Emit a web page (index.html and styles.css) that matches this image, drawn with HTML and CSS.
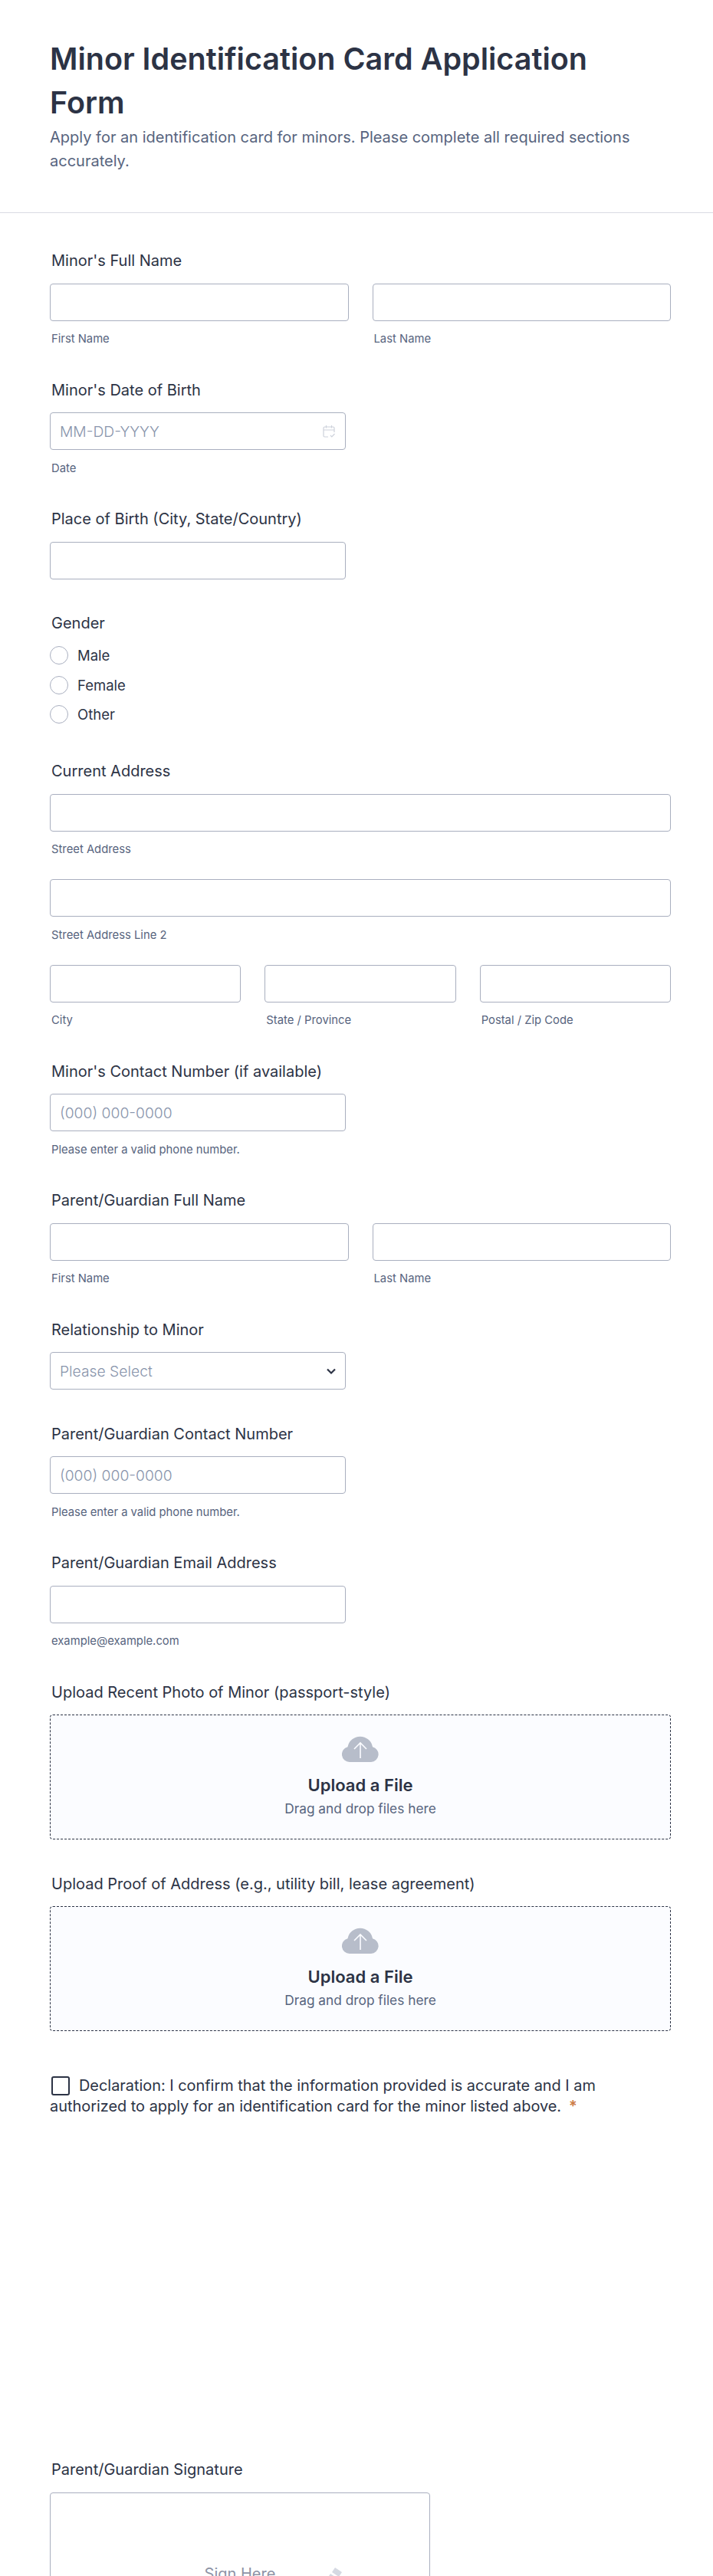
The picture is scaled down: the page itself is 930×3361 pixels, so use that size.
FILE: index.html
```html
<!DOCTYPE html>
<html lang="en">
<head>
    <meta charset="UTF-8">
    <meta name="viewport" content="width=device-width, initial-scale=1.0">
    <title>Minor Identification Card Application Form</title>
    <link rel="stylesheet" href="styles.css">
</head>
<body>
    <header class="form-header">
        <h1>Minor Identification Card Application Form</h1>
        <p>Apply for an identification card for minors. Please complete all required sections accurately.</p>
    </header>

    <form class="form-body">
        <div class="field">
            <label class="field-label">Minor's Full Name</label>
            <div class="row two">
                <div><input type="text"><span class="sub">First Name</span></div>
                <div><input type="text"><span class="sub">Last Name</span></div>
            </div>
        </div>

        <div class="field">
            <label class="field-label">Minor's Date of Birth</label>
            <div class="half with-icon">
                <input type="text" placeholder="MM-DD-YYYY">
                <svg class="date-icon" width="18" height="18" viewBox="0 0 18 18" fill="none" stroke="#cdd1db" stroke-width="1.2">
                    <path d="M8 16H3.500A1.500 1.500 0 0 1 2 14.500V4.500A1.500 1.500 0 0 1 3.500 3h11A1.500 1.500 0 0 1 16 4.500V10"/>
                    <path d="M2 7h14M5.500 1v3.500M12.500 1v3.500"/>
                    <path d="M11 14l1.800 1.800L16.500 12"/>
                </svg>
            </div>
            <span class="sub">Date</span>
        </div>

        <div class="field">
            <label class="field-label">Place of Birth (City, State/Country)</label>
            <div class="half"><input type="text"></div>
        </div>

        <div class="field gender">
            <label class="field-label radio-title">Gender</label>
            <div class="radio-list">
                <div class="radio"><span class="circle"></span>Male</div>
                <div class="radio"><span class="circle"></span>Female</div>
                <div class="radio"><span class="circle"></span>Other</div>
            </div>
        </div>

        <div class="field">
            <label class="field-label">Current Address</label>
            <div class="address-line"><input type="text"><span class="sub">Street Address</span></div>
            <div class="address-line"><input type="text"><span class="sub">Street Address Line 2</span></div>
            <div class="row three">
                <div><input type="text"><span class="sub">City</span></div>
                <div><input type="text"><span class="sub">State / Province</span></div>
                <div><input type="text"><span class="sub">Postal / Zip Code</span></div>
            </div>
        </div>

        <div class="field">
            <label class="field-label">Minor's Contact Number (if available)</label>
            <div class="half"><input type="text" placeholder="(000) 000-0000"></div>
            <span class="sub">Please enter a valid phone number.</span>
        </div>

        <div class="field">
            <label class="field-label">Parent/Guardian Full Name</label>
            <div class="row two">
                <div><input type="text"><span class="sub">First Name</span></div>
                <div><input type="text"><span class="sub">Last Name</span></div>
            </div>
        </div>

        <div class="field">
            <label class="field-label">Relationship to Minor</label>
            <div class="half with-icon">
                <select>
                    <option>Please Select</option>
                </select>
                <svg class="select-icon" width="14" height="10" viewBox="0 0 14 10" fill="none" stroke="#2c3345" stroke-width="2.200">
                    <path d="M2 2.500l5 5 5-5"/>
                </svg>
            </div>
        </div>

        <div class="field">
            <label class="field-label">Parent/Guardian Contact Number</label>
            <div class="half"><input type="text" placeholder="(000) 000-0000"></div>
            <span class="sub">Please enter a valid phone number.</span>
        </div>

        <div class="field">
            <label class="field-label">Parent/Guardian Email Address</label>
            <div class="half"><input type="email"></div>
            <span class="sub">example@example.com</span>
        </div>

        <div class="field">
            <label class="field-label">Upload Recent Photo of Minor (passport-style)</label>
            <div class="upload">
                <svg width="48" height="34" viewBox="0 0 48 34">
                    <path fill="#b7bdca" d="M10 34A10 10 0 0 1 7.500 14.300 16.500 16.500 0 0 1 40 14.300 10 10 0 0 1 38 34Z"/>
                    <path fill="none" stroke="#fbfcff" stroke-width="1.600" d="M24 29V9M16 17l8-8 8 8"/>
                </svg>
                <strong>Upload a File</strong>
                <span>Drag and drop files here</span>
            </div>
        </div>

        <div class="field">
            <label class="field-label">Upload Proof of Address (e.g., utility bill, lease agreement)</label>
            <div class="upload">
                <svg width="48" height="34" viewBox="0 0 48 34">
                    <path fill="#b7bdca" d="M10 34A10 10 0 0 1 7.500 14.300 16.500 16.500 0 0 1 40 14.300 10 10 0 0 1 38 34Z"/>
                    <path fill="none" stroke="#fbfcff" stroke-width="1.600" d="M24 29V9M16 17l8-8 8 8"/>
                </svg>
                <strong>Upload a File</strong>
                <span>Drag and drop files here</span>
            </div>
        </div>

        <div class="declaration">
            <span class="check"></span>Declaration: I confirm that the information provided is accurate and I am authorized to apply for an identification card for the minor listed above.<span class="required">*</span>
        </div>

        <div class="field">
            <label class="field-label">Parent/Guardian Signature</label>
            <div class="signature">
                <span>Sign Here</span>
                <svg class="pen" width="30" height="40" viewBox="0 0 30 40" fill="#d5d9e2">
                    <path d="M19 0l9 6-4 6-9-6zM13 8l9 6-12 18-9-6z"/>
                </svg>
            </div>
        </div>
    </form>
</body>
</html>
```

FILE: styles.css
```css
* {
    box-sizing: border-box;
}

html, body {
    margin: 0;
    padding: 0;
    background-color: #fff;
}

body {
    height: 3361px;
    overflow: hidden;
    font-family: Inter, "Noto Sans", sans-serif;
    color: #2c3345;
}

.form-header {
    padding: 49px 60px 51px 65px;
    border-bottom: 1px solid #d9dbe3;
}

.form-header h1 {
    margin: 0;
    font-size: 39.5px;
    line-height: 57.2px;
    font-weight: 600;
}

.form-header p {
    margin: 1px 0 0;
    font-size: 20px;
    line-height: 31px;
    color: #57647e;
}

.form-body {
    padding: 50px 55px 0 65px;
}

.field {
    margin-bottom: 45.5px;
}

.field-label {
    display: block;
    margin-bottom: 17.5px;
    padding-left: 2px;
    font-size: 20px;
    line-height: 24px;
    font-weight: 400;
}

input, select {
    display: block;
    width: 100%;
    height: 49px;
    padding: 0 12px;
    border: 1px solid #a9afbf;
    border-radius: 4px;
    background-color: #fff;
    font-family: inherit;
    font-size: 19.3px;
    font-weight: 300;
    color: #8894ab;
}

input::placeholder {
    color: #8894ab;
    opacity: 1;
}

select {
    appearance: none;
}

.sub {
    display: block;
    margin-top: 14.5px;
    padding-left: 2px;
    font-size: 14.8px;
    line-height: 18px;
    color: #57647e;
}

.half {
    width: 386px;
}

.with-icon {
    position: relative;
}

.date-icon {
    position: absolute;
    top: 16px;
    right: 13px;
}

.select-icon {
    position: absolute;
    top: 20px;
    right: 12px;
}

.row {
    display: grid;
    column-gap: 31px;
}

.row.two {
    grid-template-columns: 1fr 1fr;
}

.row.three {
    grid-template-columns: 1fr 1fr 1fr;
}

.address-line {
    margin-bottom: 30px;
}

.radio-title {
    margin-bottom: 18px;
}

.gender {
    margin-bottom: 50px;
}

.radio-list {
    display: flex;
    flex-direction: column;
    gap: 14.4px;
}

.radio {
    display: flex;
    align-items: center;
    gap: 12px;
    height: 24px;
    font-size: 18.5px;
}

.circle {
    width: 24px;
    height: 24px;
    border: 1px solid #a9afbf;
    border-radius: 50%;
}

.upload {
    display: flex;
    flex-direction: column;
    align-items: center;
    height: 163px;
    padding-top: 27px;
    border: 1px dashed #2c3345;
    border-radius: 4px;
    background-color: #fbfcff;
}

.upload strong {
    margin-top: 15px;
    font-size: 22px;
    line-height: 30px;
    font-weight: 600;
}

.upload span {
    margin-top: 4px;
    font-size: 17.3px;
    line-height: 24px;
    color: #57647e;
}

.declaration {
    margin-top: 58px;
    margin-bottom: 448px;
    font-size: 19.9px;
    line-height: 27px;
}

.check {
    display: inline-block;
    width: 24px;
    height: 25px;
    margin: 0 12px 0 2px;
    border: 2px solid #2c3345;
    border-radius: 3px;
    vertical-align: -6px;
}

.required {
    margin-left: 10px;
    font-weight: 600;
    color: #cc7a45;
}

.signature {
    position: relative;
    display: flex;
    align-items: center;
    justify-content: center;
    width: 496px;
    height: 212px;
    border: 1px solid #a9afbf;
    border-radius: 4px;
    font-size: 20px;
    color: #8d93a5;
}

.pen {
    position: absolute;
    left: 352px;
    top: 97px;
}
```
